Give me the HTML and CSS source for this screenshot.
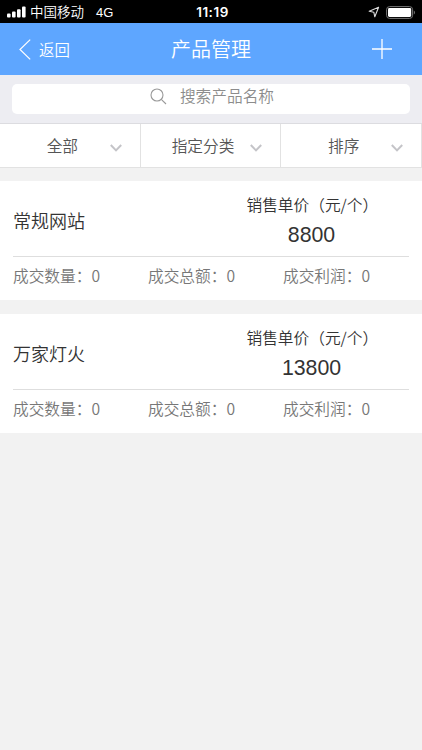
FILE: index.html
```html
<!DOCTYPE html>
<html lang="zh-CN">
<head>
    <meta charset="UTF-8">
    <meta name="viewport" content="width=device-width, initial-scale=1.0">
    <title>产品管理</title>
    <link rel="stylesheet" href="styles.css">
</head>
<body>

<div class="status-bar">
    <div class="status-left">
        <svg class="signal" width="19" height="12" viewBox="0 0 19 12" fill="#fff">
            <rect x="0" y="7.6" width="3.6" height="3.9" rx="1"/>
            <rect x="5" y="5.5" width="3.6" height="6" rx="1"/>
            <rect x="10" y="3.2" width="3.6" height="8.3" rx="1"/>
            <rect x="15" y="0.4" width="3.6" height="11.1" rx="1"/>
        </svg>
        <span class="carrier">中国移动</span>
        <span class="network">4G</span>
    </div>
    <div class="status-time">11:19</div>
    <div class="status-right">
        <svg width="12" height="12" viewBox="0 0 12 12" fill="none" stroke="#ddd" stroke-width="1.1" stroke-linejoin="round">
            <path d="M10.6 1.2 1.2 5.3 5.8 6.2 6.8 10.8Z"/>
        </svg>
        <svg width="30" height="13" viewBox="0 0 30 13">
            <rect x="0.6" y="0.6" width="26" height="11.8" rx="3" fill="none" stroke="#777" stroke-width="1"/>
            <rect x="2" y="2" width="23.2" height="9" rx="1.4" fill="#fff"/>
            <path d="M27.8 4.5c1.5.6 1.5 3.4 0 4z" fill="#777"/>
        </svg>
    </div>
</div>

<div class="header">
    <div class="back">
        <svg width="12" height="21" viewBox="0 0 12 21" fill="none" stroke="#fff" stroke-width="1.2">
            <path d="M11.2 0.6 1 10.5 11.2 20.4"/>
        </svg>
        <span>返回</span>
    </div>
    <h1>产品管理</h1>
    <svg class="add" width="20" height="20" viewBox="0 0 20 20" stroke="#fff" stroke-width="1.3">
        <path d="M10 0V20M0 10H20"/>
    </svg>
</div>

<div class="search">
    <div class="search-box">
        <svg width="17" height="17" viewBox="0 0 17 17" fill="none" stroke="#999" stroke-width="1.1">
            <circle cx="7" cy="7" r="6"/>
            <path d="M11.3 11.3 16 16"/>
        </svg>
        <span>搜索产品名称</span>
    </div>
</div>

<div class="filters">
    <div class="filter">
        <span>全部</span>
        <svg class="arrow" width="12" height="8" viewBox="0 0 12 8"><path d="M0.8 1 6 6.4 11.2 1"/></svg>
    </div>
    <div class="filter">
        <span>指定分类</span>
        <svg class="arrow" width="12" height="8" viewBox="0 0 12 8"><path d="M0.8 1 6 6.4 11.2 1"/></svg>
    </div>
    <div class="filter">
        <span>排序</span>
        <svg class="arrow" width="12" height="8" viewBox="0 0 12 8"><path d="M0.8 1 6 6.4 11.2 1"/></svg>
    </div>
</div>

<div class="card">
    <div class="card-top">
        <h2>常规网站</h2>
        <div class="price">
            <p>销售单价（元/个）</p>
            <strong>8800</strong>
        </div>
    </div>
    <div class="stats">
        <span>成交数量：<b>0</b></span>
        <span>成交总额：<b>0</b></span>
        <span>成交利润：<b>0</b></span>
    </div>
</div>

<div class="card">
    <div class="card-top">
        <h2>万家灯火</h2>
        <div class="price">
            <p>销售单价（元/个）</p>
            <strong>13800</strong>
        </div>
    </div>
    <div class="stats">
        <span>成交数量：<b>0</b></span>
        <span>成交总额：<b>0</b></span>
        <span>成交利润：<b>0</b></span>
    </div>
</div>

</body>
</html>
```

FILE: styles.css
```css
* {
    box-sizing: border-box;
    margin: 0;
    padding: 0;
}
body {
    background: #f2f2f2;
    font-family: "Liberation Sans", "Noto Sans CJK SC", sans-serif;
    font-size: 15.7px;
    font-weight: 350;
    color: #333;
}
svg {
    display: block;
    flex: none;
}
.status-bar {
    display: grid;
    grid-template-columns: 1fr auto 1fr;
    align-items: center;
    height: 23px;
    padding: 0 6px 0 7px;
    background: #000;
    color: #fff;
    font-size: 13.5px;
    line-height: 23px;
}
.status-left, .status-right {
    display: flex;
    align-items: center;
}
.carrier {
    margin-left: 4px;
    padding-top: 1px;
}
.network {
    margin-left: 12px;
    padding-top: 1px;
    font-size: 13px;
}
.status-time {
    padding: 1px 0 0 2px;
    font-family: Inter, sans-serif;
    font-size: 13.5px;
    font-weight: 600;
    letter-spacing: 0.5px;
}
.status-right {
    justify-content: flex-end;
    gap: 6px;
}
.header {
    display: grid;
    grid-template-columns: 1fr auto 1fr;
    align-items: center;
    height: 52px;
    padding: 0 30px 0 19px;
    background: #5ea6ff;
    color: #fff;
}
.header h1 {
    margin-left: 11px;
    padding-top: 1px;
    font-size: 20px;
    font-weight: 350;
    line-height: 50px;
}
.back {
    display: flex;
    align-items: center;
    gap: 8px;
    font-size: 15.4px;
}
.add {
    justify-self: end;
}
.search {
    height: 49px;
    padding: 9px 12px 0;
    background: #ededf2;
    border-bottom: 1px solid #dcdce0;
}
.search-box {
    display: flex;
    align-items: center;
    justify-content: center;
    gap: 13px;
    height: 30px;
    padding: 0 0 6px 2px;
    border-radius: 5px;
    background: #fff;
    color: #8c8c8c;
    line-height: 22px;
}
.search-box span {
    padding-top: 1px;
}
.filters {
    display: flex;
    height: 44px;
    margin-bottom: 13px;
    background: #fff;
    border-bottom: 1px solid #e2e2e2;
}
.filter {
    display: flex;
    flex: 1;
    align-items: center;
    padding-right: 18px;
    border-right: 1px solid #e2e2e2;
    color: #555;
    line-height: 43px;
}
.filter span {
    flex: 1;
    padding: 1px 0 0 15px;
    text-align: center;
}
.arrow {
    margin-top: 4px;
    fill: none;
    stroke: #c4c4c8;
    stroke-width: 2;
}
.card {
    height: 119px;
    margin-bottom: 14px;
    padding: 0 13px;
    background: #fff;
}
.card-top {
    display: flex;
    justify-content: space-between;
    height: 76px;
    border-bottom: 1px solid #dedede;
}
.card h2 {
    padding-top: 4px;
    font-size: 18px;
    font-weight: 350;
    line-height: 75px;
}
.price {
    width: 196px;
    padding-top: 11px;
}
.price p {
    padding-left: 33.5px;
    font-family: "Noto Sans CJK SC", sans-serif;
    line-height: 25px;
}
.price strong {
    display: block;
    padding: 1px 0 0 1px;
    font-size: 21.3px;
    font-weight: 400;
    line-height: 34px;
    text-align: center;
}
.stats {
    display: grid;
    grid-template-columns: repeat(3, 135px);
    font-family: "Noto Sans CJK SC", sans-serif;
    color: #777;
    line-height: 38px;
}
.stats b {
    font-weight: 350;
}
```
